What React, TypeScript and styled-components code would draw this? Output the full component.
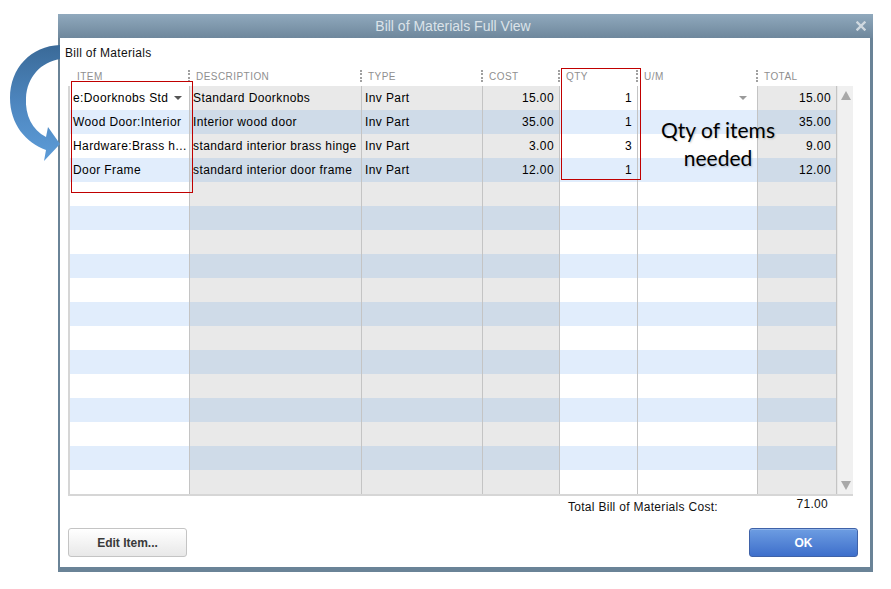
import React from "react";
import styled, { createGlobalStyle } from "styled-components";

const GlobalStyle = createGlobalStyle`
  body {
    margin: 0;
    background: #ffffff;
    font-family: "Liberation Sans", Arial, sans-serif;
  }
`;

const COLS = "120px 172px 121px 77px 78px 120px 79px";

type Row = {
  item: string;
  description: string;
  type: string;
  cost: string;
  qty: string;
  total: string;
};

const rows: Row[] = [
  { item: "e:Doorknobs Std", description: "Standard Doorknobs", type: "Inv Part", cost: "15.00", qty: "1", total: "15.00" },
  { item: "Wood Door:Interior", description: "Interior wood door", type: "Inv Part", cost: "35.00", qty: "1", total: "35.00" },
  { item: "Hardware:Brass h...", description: "standard interior brass hinge", type: "Inv Part", cost: "3.00", qty: "3", total: "9.00" },
  { item: "Door Frame", description: "standard interior door frame", type: "Inv Part", cost: "12.00", qty: "1", total: "12.00" },
];

const ROW_COUNT = 17;

// light = white / pale blue columns, dark = grey / blue-grey columns
const columns: { key: keyof Row | "um"; tone: "light" | "dark"; align: "left" | "right" }[] = [
  { key: "item", tone: "light", align: "left" },
  { key: "description", tone: "dark", align: "left" },
  { key: "type", tone: "dark", align: "left" },
  { key: "cost", tone: "dark", align: "right" },
  { key: "qty", tone: "light", align: "right" },
  { key: "um", tone: "light", align: "left" },
  { key: "total", tone: "dark", align: "right" },
];

const headers = ["ITEM", "DESCRIPTION", "TYPE", "COST", "QTY", "U/M", "TOTAL"];

const Page = styled.div`
  position: relative;
  width: 891px;
  height: 589px;
  overflow: hidden;
  padding-top: 14px;
  padding-left: 58px;
  box-sizing: border-box;
`;

const Window = styled.div`
  width: 815px;
  display: flex;
  flex-direction: column;
`;

const TitleBar = styled.div`
  height: 24px;
  display: flex;
  align-items: center;
  background: linear-gradient(#90a9bd, #6e879c);
`;

const Title = styled.div`
  flex: 1;
  text-align: center;
  color: #dbe3e9;
  font-size: 14px;
`;

const Close = styled.div`
  width: 25px;
  display: flex;
  justify-content: center;
  align-items: center;
`;

const Body = styled.div`
  background: #ffffff;
  border-left: 2px solid #6a8397;
  border-right: 3px solid #6a8397;
  border-bottom: 5px solid #6a8397;
  padding: 8px 12px 10px 8px;
  display: flex;
  flex-direction: column;
`;

const SectionLabel = styled.div`
  font-size: 12px;
  line-height: 14px;
  color: #111;
  margin-left: -3px;
  letter-spacing: 0.3px;
`;

const HeaderRow = styled.div`
  margin-top: 6px;
  height: 20px;
  display: grid;
  grid-template-columns: ${COLS};
  padding-left: 2px;
`;

const HeaderCell = styled.div<{ $first?: boolean }>`
  display: flex;
  align-items: center;
  margin-left: ${(p) => (p.$first ? "-1px" : "-2px")};
  font-size: 10px;
  color: #8f8f8f;
  letter-spacing: 0.45px;
`;

const Grip = styled.span<{ $hidden?: boolean }>`
  width: 0;
  height: 12px;
  border-left: 2px dotted ${(p) => (p.$hidden ? "transparent" : "#a0a0a0")};
  margin-right: 6px;
`;

const Table = styled.div`
  width: 785px;
  box-sizing: border-box;
  display: flex;
  border-left: 2px solid #d6d6d6;
  border-bottom: 2px solid #d6d6d6;
`;

const Rows = styled.div`
  width: 767px;
  display: flex;
  flex-direction: column;
`;

const GridRow = styled.div<{ $selected?: boolean }>`
  height: 24px;
  display: grid;
  grid-template-columns: ${COLS};
  box-shadow: ${(p) => (p.$selected ? "inset 0 0 0 1px #7d7d7d" : "none")};
`;

const Cell = styled.div<{ $tone: "light" | "dark"; $odd: boolean; $align: "left" | "right"; $white?: boolean }>`
  display: flex;
  align-items: center;
  justify-content: ${(p) => (p.$align === "right" ? "flex-end" : "space-between")};
  padding: 0 5px 0 3px;
  font-size: 12px;
  letter-spacing: 0.4px;
  color: #000;
  white-space: nowrap;
  overflow: hidden;
  border-right: 1px solid #c4c4c4;
  background: ${(p) =>
    p.$white
      ? "#ffffff"
      : p.$tone === "light"
      ? p.$odd
        ? "#e1edfc"
        : "#ffffff"
      : p.$odd
      ? "#cfdbe8"
      : "#e9e9e9"};
`;

const DropArrow = styled.span<{ $shade: string }>`
  width: 0;
  height: 0;
  border-left: 4px solid transparent;
  border-right: 4px solid transparent;
  border-top: 4px solid ${(p) => p.$shade};
  margin-right: ${(p) => (p.$shade === "#555" ? "2px" : "5px")};
`;

const ScrollBar = styled.div`
  width: 16px;
  background: #f0f0f0;
  border-left: 1px solid #e6e6e6;
  display: flex;
  flex-direction: column;
  justify-content: space-between;
  align-items: center;
  padding: 5px 0 4px;
  box-sizing: border-box;
`;

const ScrollArrow = styled.span<{ $down?: boolean }>`
  width: 0;
  height: 0;
  border-left: 5px solid transparent;
  border-right: 5px solid transparent;
  ${(p) => (p.$down ? "border-top: 9px solid #a8a8a8;" : "border-bottom: 9px solid #a8a8a8;")}
`;

const TotalRow = styled.div`
  margin-top: 1px;
  display: flex;
  justify-content: flex-end;
  padding-right: 30px;
  font-size: 12px;
  color: #111;
  letter-spacing: 0.3px;
`;

const TotalLabel = styled.span`
  padding-top: 3px;
`;

const TotalValue = styled.span`
  width: 110px;
  text-align: right;
`;

const ButtonRow = styled.div`
  margin-top: 14px;
  display: flex;
  justify-content: space-between;
`;

const Button = styled.button<{ $primary?: boolean }>`
  height: 29px;
  width: ${(p) => (p.$primary ? "109px" : "119px")};
  border-radius: 3px;
  font-family: "Liberation Sans", Arial, sans-serif;
  font-size: 12px;
  font-weight: bold;
  cursor: pointer;
  border: 1px solid ${(p) => (p.$primary ? "#3f62a8" : "#c4c4c4")};
  color: ${(p) => (p.$primary ? "#ffffff" : "#3a3a3a")};
  background: ${(p) =>
    p.$primary
      ? "linear-gradient(#6d9de2, #3e6fcb)"
      : "linear-gradient(#ffffff, #e8e8e8)"};
  box-shadow: ${(p) => (p.$primary ? "inset 0 1px 0 #8fb4ea" : "inset 0 1px 0 #ffffff")};
`;

const Callout = styled.div`
  position: absolute;
  border: 1.5px solid #c00000;
  box-sizing: border-box;
`;

const Annotation = styled.div`
  position: absolute;
  left: 650px;
  top: 116px;
  width: 136px;
  text-align: center;
  font-family: Lato, "Open Sans", sans-serif;
  font-size: 21px;
  line-height: 28px;
  color: #000;
  text-shadow: 1px 1px 2px rgba(0, 0, 0, 0.2);
`;

const ArrowSvg = styled.svg`
  position: absolute;
  left: 0;
  top: 0;
`;

const CurvedArrow = () => (
  <ArrowSvg width="70" height="170" viewBox="0 0 70 170">
    <defs>
      <linearGradient id="arrowFill" x1="0" y1="0" x2="0" y2="1">
        <stop offset="0" stopColor="#3a6a98" />
        <stop offset="0.5" stopColor="#4d86bf" />
        <stop offset="1" stopColor="#5d9cd8" />
      </linearGradient>
    </defs>
    <path
      d="M60 45 C31 46 10 68 10 98 C10 124 26 143 46 150 L44 161 L60 144 L48 127 L46 137 C32 130 25 115 26 98 C27 77 41 62 60 59 Z"
      fill="url(#arrowFill)"
    />
  </ArrowSvg>
);

const CloseIcon = () => (
  <svg width="10" height="10" viewBox="0 0 10 10">
    <path d="M1.5 1.5 L8.5 8.5 M8.5 1.5 L1.5 8.5" stroke="#cfd8df" strokeWidth="2.4" strokeLinecap="square" />
  </svg>
);

export default function App() {
  return (
    <>
      <GlobalStyle />
      <Page>
        <Window>
          <TitleBar>
            <Title>Bill of Materials Full View</Title>
            <Close>
              <CloseIcon />
            </Close>
          </TitleBar>
          <Body>
            <SectionLabel>Bill of Materials</SectionLabel>
            <HeaderRow>
              {headers.map((h, i) => (
                <HeaderCell key={h} $first={i === 0}>
                  <Grip $hidden={i === 0} />
                  {h}
                </HeaderCell>
              ))}
            </HeaderRow>
            <Table>
              <Rows>
                {Array.from({ length: ROW_COUNT }).map((_, r) => {
                  const data = rows[r];
                  const odd = r % 2 === 1;
                  return (
                    <GridRow key={r} $selected={r === 0}>
                      {columns.map((c) => {
                        const text = data && c.key !== "um" ? data[c.key] : "";
                        const editing = r === 0 && (c.key === "item" || c.key === "qty" || c.key === "um");
                        return (
                          <Cell key={c.key} $tone={c.tone} $odd={odd} $align={c.align} $white={editing}>
                            <span>{text}</span>
                            {r === 0 && c.key === "item" && <DropArrow $shade="#555" />}
                            {r === 0 && c.key === "um" && <DropArrow $shade="#9a9a9a" />}
                          </Cell>
                        );
                      })}
                    </GridRow>
                  );
                })}
              </Rows>
              <ScrollBar>
                <ScrollArrow />
                <ScrollArrow $down />
              </ScrollBar>
            </Table>
            <TotalRow>
              <TotalLabel>Total Bill of Materials Cost:</TotalLabel>
              <TotalValue>71.00</TotalValue>
            </TotalRow>
            <ButtonRow>
              <Button>Edit Item...</Button>
              <Button $primary>OK</Button>
            </ButtonRow>
          </Body>
        </Window>

        <CurvedArrow />
        <Callout style={{ left: 71, top: 81, width: 122, height: 112 }} />
        <Callout style={{ left: 561, top: 68, width: 80, height: 112 }} />
        <Annotation>
          Qty of items
          <br />
          needed
        </Annotation>
      </Page>
    </>
  );
}
